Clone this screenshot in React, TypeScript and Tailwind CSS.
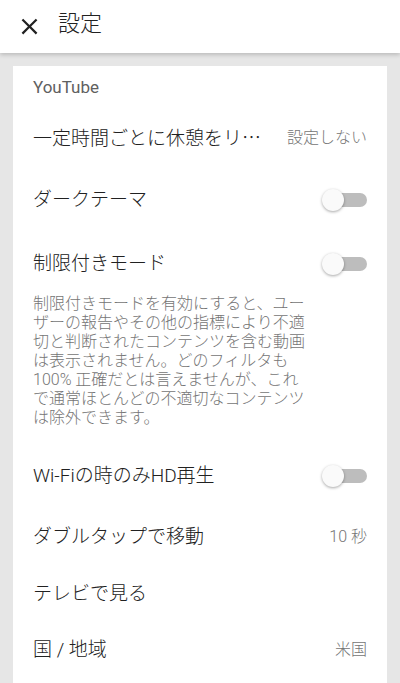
import React from "react";

const font = "font-['Roboto','Noto_Sans_CJK_JP',sans-serif]";

// トグル（オフ状態）
const Toggle = () => (
  <div className="relative w-[45px] h-[24px] shrink-0">
    <div className="absolute right-0 top-[5px] w-[36px] h-[14px] rounded-full bg-[#bdbdbd]" />
    <div className="absolute left-0 top-[1px] w-[22px] h-[22px] rounded-full bg-[#fafafa] shadow-[0_1px_3px_rgba(0,0,0,0.35)]" />
  </div>
);

const Row = ({
  title,
  value,
  toggle,
  h,
}: {
  title: React.ReactNode;
  value?: string;
  toggle?: boolean;
  h: string;
}) => (
  <div className={`flex items-center justify-between ${h}`}>
    <span className="text-[19px] text-[#212121] whitespace-nowrap">{title}</span>
    {value && <span className="text-[16px] text-[#757575] whitespace-nowrap">{value}</span>}
    {toggle && <Toggle />}
  </div>
);

const descLines = [
  "制限付きモードを有効にすると、ユー",
  "ザーの報告やその他の指標により不適",
  "切と判断されたコンテンツを含む動画",
  "は表示されません。どのフィルタも",
  "100% 正確だとは言えませんが、これ",
  "で通常ほとんどの不適切なコンテンツ",
  "は除外できます。",
];

export default function App() {
  return (
    <div className={`w-[400px] h-[683px] overflow-hidden bg-[#e6e6e6] font-light ${font}`}>
      <header className="relative z-10 h-[53px] bg-white flex items-center shadow-[0_2px_4px_rgba(0,0,0,0.18)]">
        <div className="w-[58px] flex justify-center pl-[1px]">
          <svg width="27" height="27" viewBox="0 0 24 24" fill="#212121">
            <path d="M19 6.41L17.59 5 12 10.59 6.41 5 5 6.41 10.59 12 5 17.59 6.41 19 12 13.41 17.59 19 19 17.59 13.41 12z" />
          </svg>
        </div>
        <h1 className="text-[22px] text-[#212121] -mt-[6px]">設定</h1>
      </header>

      <main className="pt-[13px] px-[13px]">
        <section className="bg-white px-[20px] h-[620px]">
          <div className="h-[44px] flex items-center">
            <span className="text-[17px] font-normal text-[#606060]">YouTube</span>
          </div>
          <Row
            h="h-[56px]"
            title={
              <>
                一定時間ごとに休憩をリ
                <span className="font-['Noto_Sans_CJK_JP',sans-serif]">…</span>
              </>
            }
            value="設定しない"
          />
          <Row h="h-[68px]" title="ダークテーマ" toggle />
          <Row h="h-[60px]" title="制限付きモード" toggle />
          <p className="text-[16px] leading-[19px] text-[#757575] mb-[19px]">
            {descLines.map((l) => (
              <span key={l} className="block whitespace-nowrap">
                {l}
              </span>
            ))}
          </p>
          <Row h="h-[60px]" title="Wi-Fiの時のみHD再生" toggle />
          <Row h="h-[62px]" title="ダブルタップで移動" value="10 秒" />
          <Row h="h-[52px]" title="テレビで見る" />
          <Row h="h-[60px]" title="国 / 地域" value="米国" />
        </section>
      </main>
    </div>
  );
}
